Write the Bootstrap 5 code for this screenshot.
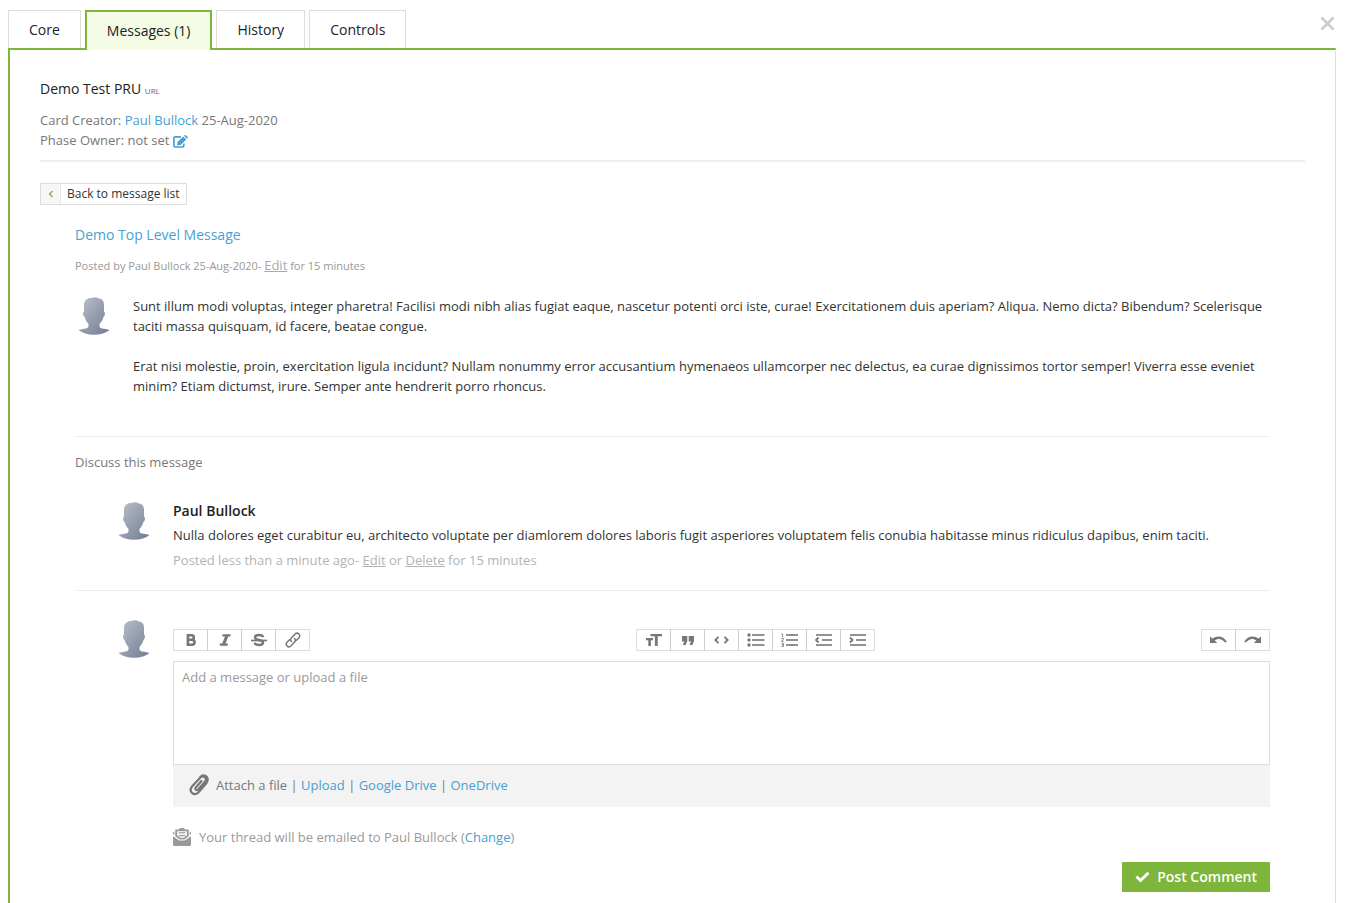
<!DOCTYPE html>
<html lang="en">
<head>
<meta charset="utf-8">
<meta name="viewport" content="width=device-width, initial-scale=1">
<title>Demo Test PRU</title>
<link href="https://cdn.jsdelivr.net/npm/bootstrap@5.3.0/dist/css/bootstrap.min.css" rel="stylesheet">
<style>
  body { font-family: "Open Sans", sans-serif; font-size: 13px; line-height: 20px; color: #333; background: #fff; }
  a { color: #489fd2; text-decoration: none; }
  .page { padding: 10px 15px 0 8px; }
  .tab-bar { height: 38px; }
  .card-tabs { gap: 4px; border: 0; font-size: 14px; }
  .card-tabs .nav-link { margin: 0; padding: 9px 20px 8px; color: #222; background: #fff; border: 1px solid #ddd; border-bottom: 0; border-radius: 0; }
  .card-tabs .nav-link.active { padding: 9px 20px; color: #222; background: #f4fce6; border: 2px solid #7db63a; border-bottom: 0; position: relative; z-index: 1; }
  .close-x { width: 17px; height: 17px; padding: 0; margin-top: 5px; border: 0; background: none; color: #ccc; line-height: 0; }
  .panel { border: solid #ddd; border-width: 2px 1px 0 2px; border-top-color: #7db63a; border-left-color: #7db63a; padding: 29px 30px 11px; }
  .heading { font-size: 14px; line-height: 20px; color: #222; }
  .heading small { font-size: 8px; color: #666; }
  .soft { color: #777; }
  .meta { padding-bottom: 10px; margin-top: 9px; border-bottom: 2px solid #eee; }
  .back-btn { margin-top: 21px; padding: 0; border: 1px solid #ddd; border-radius: 0; background: #fff; font-size: 12px; line-height: 20px; color: #333; }
  .back-btn .arrow { width: 20px; background: #f7f7f7; border-right: 1px solid #e8e8e8; }
  .back-btn .caption { padding: 0 6px; }
  .thread { padding: 0 35px; }
  .topic { font-size: 14px; margin: 20px 0 0; line-height: 20px; }
  .posted { margin-top: 10px; font-size: 11px; color: #999; }
  .muted-link { color: #aaa; font-size: 13px; text-decoration: underline; }
  .faint, .faint a { color: #b3b3b3; }
  .face { width: 38px; height: 40px; flex: none; }
  .message { margin-top: 20px; padding-bottom: 40px; border-bottom: 1px solid #eee; gap: 20px; }
  .message p { margin-bottom: 20px; }
  .message p:last-child { margin-bottom: 0; }
  .discuss { padding-top: 15px; }
  .comment { gap: 20px; padding: 29px 0 20px 40px; border-bottom: 1px solid #eee; }
  .comment p { margin: 0 0 5px; }
  .comment .author { margin-bottom: 4px; font-size: 14px; font-weight: 600; color: #222; }
  .reply { gap: 20px; padding: 28px 0 0 40px; }
  .tools { margin-top: 10px; }
  .tools .btn { width: 35px; height: 22px; padding: 0; border: 1px solid #ddd; border-radius: 0; color: #777; display: flex; align-items: center; justify-content: center; flex: none; }
  .tools .btn:not(:first-child) { border-left-color: #ccc; }
  .msg-box { margin-top: 10px; height: 104px; padding: 5px 8px; border: 1px solid #ddd; border-radius: 0; font-size: 13px; line-height: 20px; resize: none; }
  .msg-box::placeholder { color: #999; }
  .attach { height: 42px; padding: 0 16px 2px; gap: 7px; background: #f3f3f3; }
  .emailed { margin-top: 20px; gap: 8px; color: #999; }
  .post-btn { margin-top: 15px; height: 30px; padding: 0 13px; gap: 7px; border: 0; border-radius: 0; background: #7db63a; color: #fff; font-size: 14px; font-weight: 600; }
</style>
</head>
<body>
<svg width="0" height="0" class="position-absolute" aria-hidden="true">
  <defs>
    <linearGradient id="faceFill" x1="0" y1="0" x2="1" y2="1"><stop offset="0" stop-color="#bcc2cc"/><stop offset="1" stop-color="#6f7b92"/></linearGradient>
    <symbol id="face" viewBox="0 0 38 40">
      <path fill="url(#faceFill)" d="M18 1.800C20 1 22 1.200 23.500 2.600 27 2.600 29 4.800 29 9V15.500C30.600 16.300 30 20.300 28.500 20.800 28 23.400 26.500 25.500 24.500 28 24.200 31 24.800 31.800 27 32.500 30 33 32.500 33.200 34.500 34 31 37.200 25.500 38.700 19 38.700S7 37.200 3.500 34C5.500 33.200 8 33 11 32.500 13.200 31.800 13.800 31 13.500 28 11.500 25.500 10 23.400 9.500 20.800 8 20.300 7.400 16.300 9 15.500V9C9 4.500 12.500 1.400 18 1.800z"/>
    </symbol>
  </defs>
</svg>
<div class="page min-vh-100 d-flex flex-column">
  <header class="tab-bar d-flex justify-content-between align-items-start">
    <ul class="nav nav-tabs card-tabs">
      <li class="nav-item"><a class="nav-link" href="#">Core</a></li>
      <li class="nav-item"><a class="nav-link active" aria-current="page" href="#">Messages (1)</a></li>
      <li class="nav-item"><a class="nav-link" href="#">History</a></li>
      <li class="nav-item"><a class="nav-link" href="#">Controls</a></li>
    </ul>
    <button type="button" class="close-x" aria-label="Close"><svg width="17" height="17" viewBox="0 0 17 17" stroke="currentColor" stroke-width="2.500"><path d="M2.500 2.500l12 12M14.500 2.500l-12 12"/></svg></button>
  </header>

  <main class="panel flex-grow-1">
    <h1 class="heading m-0 fw-normal">Demo Test PRU <small>URL</small></h1>
    <div class="meta soft">
      <div>Card Creator: <a href="#">Paul Bullock</a> 25-Aug-2020</div>
      <div>Phase Owner: not set <a href="#" aria-label="Edit phase owner"><svg width="15" height="13" viewBox="0 0 15 13"><path fill="none" stroke="currentColor" stroke-width="1.700" d="M8 1.900H2.300Q.9 1.900.9 3.400V10.600Q.9 12 2.300 12H9.300Q10.800 12 10.800 10.600V8.500"/><path fill="currentColor" d="M10.200 1.400l3 3-5.600 5.600-3.600.5.500-3.600zM11 .7l.7-.5q.6-.4 1.200 0l1.600 1.600q.5.600 0 1.200l-.6.700z"/></svg></a></div>
    </div>
    <button type="button" class="back-btn d-inline-flex">
      <span class="arrow d-flex align-items-center justify-content-center"><svg width="6" height="8" viewBox="0 0 6 8" fill="none" stroke="#7db63a" stroke-width="1.300"><path d="M4.500 1L1.500 4l3 3"/></svg></span>
      <span class="caption">Back to message list</span>
    </button>

    <div class="thread">
      <h2 class="topic fw-normal"><a href="#">Demo Top Level Message</a></h2>
      <div class="posted">Posted by Paul Bullock 25-Aug-2020- <a class="muted-link" href="#">Edit</a> for 15 minutes</div>

      <article class="message d-flex">
        <svg class="face" role="img" aria-label="Paul Bullock"><use href="#face"/></svg>
        <div>
          <p>Sunt illum modi voluptas, integer pharetra! Facilisi modi nibh alias fugiat eaque, nascetur potenti orci iste, curae! Exercitationem duis aperiam? Aliqua. Nemo dicta? Bibendum? Scelerisque taciti massa quisquam, id facere, beatae congue.</p>
          <p>Erat nisi molestie, proin, exercitation ligula incidunt? Nullam nonummy error accusantium hymenaeos ullamcorper nec delectus, ea curae dignissimos tortor semper! Viverra esse eveniet minim? Etiam dictumst, irure. Semper ante hendrerit porro rhoncus.</p>
        </div>
      </article>

      <div class="discuss soft">Discuss this message</div>

      <article class="comment d-flex">
        <svg class="face" role="img" aria-label="Paul Bullock"><use href="#face"/></svg>
        <div>
          <p class="author">Paul Bullock</p>
          <p>Nulla dolores eget curabitur eu, architecto voluptate per diamlorem dolores laboris fugit asperiores voluptatem felis conubia habitasse minus ridiculus dapibus, enim taciti.</p>
          <div class="faint">Posted less than a minute ago- <a class="muted-link" href="#">Edit</a> or <a class="muted-link" href="#">Delete</a> for 15 minutes</div>
        </div>
      </article>

      <form class="reply d-flex">
        <svg class="face" aria-hidden="true"><use href="#face"/></svg>
        <div class="flex-grow-1">
          <div class="tools d-flex justify-content-between" role="toolbar" aria-label="Formatting">
            <div class="btn-group">
              <button type="button" class="btn" aria-label="Bold"><svg width="12" height="14" viewBox="0 0 12 14" fill="none" stroke="currentColor" stroke-width="2.600"><path d="M2.600 2.300H6.600Q8.800 2.300 8.800 4.500T6.600 6.800H2.600M6.600 6.800Q9.600 6.800 9.600 9.200T7 11.700H2.600M2.900 1V13"/></svg></button>
              <button type="button" class="btn" aria-label="Italic"><svg width="12" height="14" viewBox="0 0 12 14" fill="currentColor"><path d="M3.500 1.200h8v2.300H9.300L6.500 10.500h2.300v2.300h-8v-2.300H3.200L6 3.500H3.500z"/></svg></button>
              <button type="button" class="btn" aria-label="Strikethrough"><svg width="16" height="14" viewBox="0 0 16 14" fill="none" stroke="currentColor"><path stroke-width="1.700" d="M0 7.500h16"/><path stroke-width="2.400" d="M12.200 4.200Q11.500 2 8 2 4 2 4 4.200T8 7q4 .6 4 2.700T8 12Q4.200 12 3.600 9.800"/></svg></button>
              <button type="button" class="btn" aria-label="Link"><svg width="16" height="16" viewBox="0 0 16 16" fill="none" stroke="currentColor" stroke-width="1.500" stroke-linecap="round"><path d="M6.500 9.500C5 8 5.500 6.800 6.600 5.700l3.300-3.500c1.300-1.300 3-1.200 4-.2s1.100 2.700-.2 4L11.500 8.200M9.500 6.500C11 8 10.500 9.200 9.400 10.300l-3.300 3.500c-1.300 1.300-3 1.200-4 .2s-1.100-2.700.2-4L4.500 7.800"/></svg></button>
            </div>
            <div class="btn-group">
              <button type="button" class="btn" aria-label="Heading"><svg width="16" height="14" viewBox="0 0 16 14" fill="currentColor"><path d="M4.500 1H16V3.300h-4.300V13H8.900V3.300H4.500zM0 5h7v2.300H4.900V13H2.300V7.300H0z"/></svg></button>
              <button type="button" class="btn" aria-label="Quote"><svg width="12" height="9" viewBox="0 0 12 9" fill="currentColor"><path d="M0 0h5.300v5L3.600 9H.8l1.500-3.600H0zM6.700 0H12v5l-1.700 4H7.500L9 5.400H6.700z"/></svg></button>
              <button type="button" class="btn" aria-label="Code"><svg width="15" height="8" viewBox="0 0 15 8" fill="none" stroke="currentColor" stroke-width="1.800"><path d="M4.500.8L1.300 4l3.200 3.200M10.500.8L13.700 4l-3.200 3.200"/></svg></button>
              <button type="button" class="btn" aria-label="Bulleted list"><svg width="18" height="14" viewBox="0 0 18 14" fill="currentColor"><circle cx="2" cy="2" r="1.700"/><circle cx="2" cy="7" r="1.700"/><circle cx="2" cy="12" r="1.700"/><path d="M5 1h12.500v2H5zM5 6h12.500v2H5zM5 11h12.500v2H5z" opacity=".8"/></svg></button>
              <button type="button" class="btn" aria-label="Numbered list"><svg width="17" height="14" viewBox="0 0 17 14"><path fill="none" stroke="currentColor" stroke-width=".9" d="M.5 1H1.600V4M.4 5.600H2.400V6.400L.6 8.400H2.600M.4 10.400H2.400V13.400H.4M.8 11.900H2.400"/><path fill="currentColor" opacity=".8" d="M5 1h12v2H5zM5 6h12v2H5zM5 11h12v2H5z"/></svg></button>
              <button type="button" class="btn" aria-label="Outdent"><svg width="18" height="12" viewBox="0 0 18 12"><path fill="currentColor" opacity=".8" d="M1 0h16v2H1zM7 5h10v2H7zM1 10h16v2H1z"/><path fill="none" stroke="currentColor" stroke-width="1.800" d="M3.500 3.500L1 6 3.500 8.500"/></svg></button>
              <button type="button" class="btn" aria-label="Indent"><svg width="18" height="12" viewBox="0 0 18 12"><path fill="currentColor" opacity=".8" d="M1 0h16v2H1zM7 5h10v2H7zM1 10h16v2H1z"/><path fill="none" stroke="currentColor" stroke-width="1.800" d="M1 3.500L3.500 6 1 8.500"/></svg></button>
            </div>
            <div class="btn-group">
              <button type="button" class="btn" aria-label="Undo"><svg width="17" height="8" viewBox="0 0 17 8"><path fill="currentColor" d="M0 .5L2.500 2.600C7-1 13.500-.3 16.800 5.800L15 6.600C12 2.600 8 2 4.700 4.600L7.200 7H0z"/></svg></button>
              <button type="button" class="btn" aria-label="Redo"><svg width="17" height="8" viewBox="0 0 17 8"><path fill="currentColor" d="M17 .5L14.500 2.600C10-1 3.500-.3.2 5.800L2 6.600C5 2.600 9 2 12.300 4.600L9.800 7H17z"/></svg></button>
            </div>
          </div>
          <textarea class="form-control msg-box" placeholder="Add a message or upload a file" aria-label="Message"></textarea>
          <div class="attach soft d-flex align-items-center">
            <svg width="20" height="22" viewBox="0 0 20 22" fill="none" stroke="currentColor" stroke-width="2.200" stroke-linecap="round"><path d="M12.500 7L7 13.300c-1.500 1.900.6 3.800 2.200 2.100L15.900 7.800c2.800-3.500-1.500-7.300-4.700-4L3.200 12.300c-4.200 5.200 1.800 10.400 6.400 5.900L17.300 9.400c2.400-3.300 1.500-6.500-1-7.700-2-.9-3.700-.3-5.100 1.200"/></svg>
            <span>Attach a file | <a href="#">Upload</a> | <a href="#">Google Drive</a> | <a href="#">OneDrive</a></span>
          </div>
          <div class="emailed d-flex align-items-center">
            <svg width="18" height="18" viewBox="0 0 18 18"><path fill="currentColor" d="M0 8.200L6.300 12.600H11.700L18 8.200V16.500Q18 18 16.500 18H1.500Q0 18 0 16.500zM1.300 3.400V7L0 6V4.800Q0 3.800 1.300 3.400zM16.700 3.400V7L18 6V4.800Q18 3.800 16.700 3.400z"/><path fill="currentColor" fill-rule="evenodd" d="M2.300 1.500H5.500L7.500 0h3l2 1.500h3.200V8.300L11.300 11.400H6.700L2.300 8.300zM4.200 3.300V7.600L7.200 9.700H10.800L13.800 7.600V3.300z"/><path fill="currentColor" d="M5.800 4.200h6.400v1.300H5.800zM5.800 6.900h6.400v1.300H5.800z"/></svg>
            <span>Your thread will be emailed to Paul Bullock (<a href="#">Change</a>)</span>
          </div>
          <div class="d-flex justify-content-end">
            <button type="submit" class="post-btn d-flex align-items-center"><svg width="15" height="12" viewBox="0 0 15 12" fill="none" stroke="currentColor" stroke-width="3"><path d="M1.500 5.500L5.500 9.500 13.500 1.700"/></svg>Post Comment</button>
          </div>
        </div>
      </form>
    </div>
  </main>
</div>
<script src="https://cdn.jsdelivr.net/npm/bootstrap@5.3.0/dist/js/bootstrap.bundle.min.js"></script>
</body>
</html>
